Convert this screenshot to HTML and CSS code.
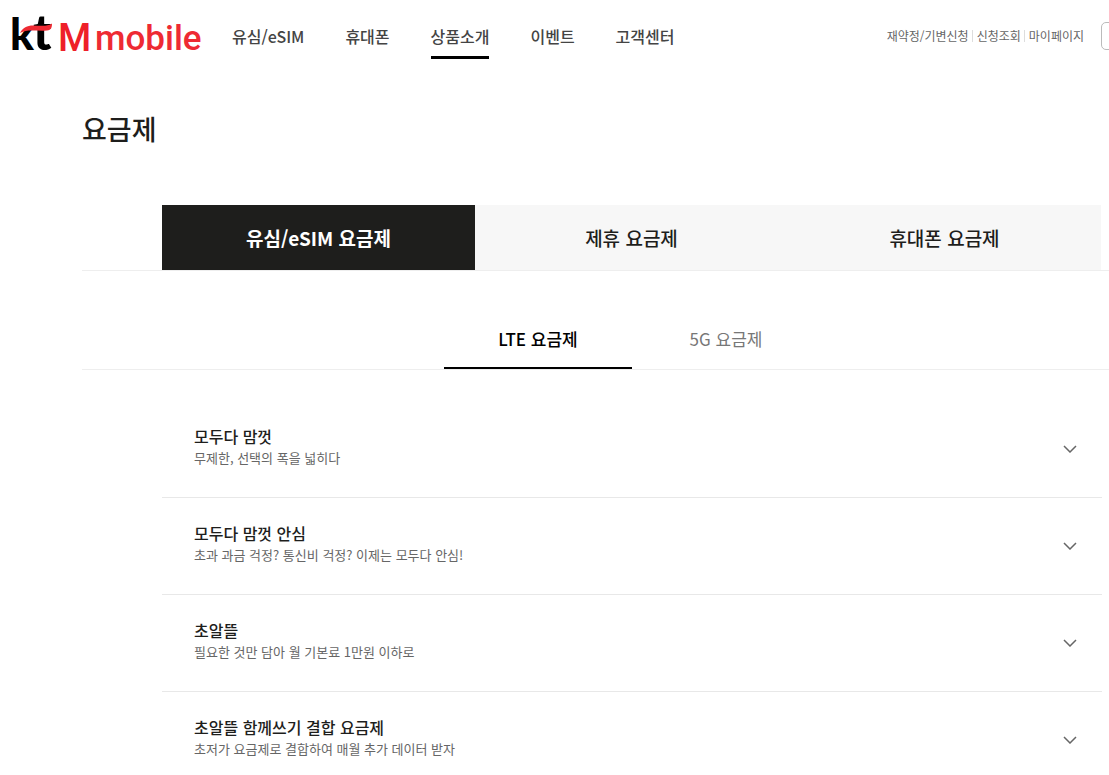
FILE: index.html
```html
<!DOCTYPE html>
<html lang="ko">
<head>
<meta charset="utf-8">
<meta name="viewport" content="width=device-width, initial-scale=1">
<title>요금제 | kt M mobile</title>
<link rel="stylesheet" href="styles.css">
</head>
<body>
<header class="header">
  <a class="logo" href="#" aria-label="kt M mobile">
    <svg class="logo-art" viewBox="0 0 192 44" aria-hidden="true">
      <text class="logo-k" x="-2" y="36">k</text>
      <text class="logo-t" x="21" y="36">t</text>
      <path class="logo-swoosh" d="M8 19C11 13.500 15 11.500 21 11.500C28 11.500 35 13 40 9.500C40 13 39.500 16 35 16.500C30 17 25 16.500 20 16.500C15 16.500 12 17 8 19Z"/>
      <text class="logo-m" x="46" y="37">M</text>
      <text class="logo-mobile" x="83" y="36">mobile</text>
    </svg>
  </a>
  <nav class="gnb" aria-label="주 메뉴">
    <a href="#">유심/eSIM</a>
    <a href="#">휴대폰</a>
    <a class="is-active" href="#">상품소개</a>
    <a href="#">이벤트</a>
    <a href="#">고객센터</a>
  </nav>
  <nav class="util" aria-label="바로가기">
    <a href="#">재약정/기변신청</a>
    <a href="#">신청조회</a>
    <a href="#">마이페이지</a>
  </nav>
  <button class="search" type="button" aria-label="검색"></button>
</header>

<main class="content">
  <h1 class="title">요금제</h1>
  <div class="tabs-wrap">
    <div class="tabs" role="tablist">
      <button class="tab is-active" type="button" role="tab" aria-selected="true">유심/eSIM 요금제</button>
      <button class="tab" type="button" role="tab" aria-selected="false">제휴 요금제</button>
      <button class="tab" type="button" role="tab" aria-selected="false">휴대폰 요금제</button>
    </div>
  </div>
  <div class="subtabs-wrap">
    <div class="subtabs" role="tablist">
      <button class="subtab is-active" type="button" role="tab" aria-selected="true">LTE 요금제</button>
      <button class="subtab" type="button" role="tab" aria-selected="false">5G 요금제</button>
    </div>
  </div>
  <ul class="plans">
    <li><button class="plan" type="button" aria-expanded="false">
      <span class="plan-text"><strong class="plan-name">모두다 맘껏</strong><span class="plan-desc">무제한, 선택의 폭을 넓히다</span></span>
      <svg class="chevron" viewBox="0 0 14 8" aria-hidden="true"><path d="M1 1L7 7L13 1"/></svg>
    </button></li>
    <li><button class="plan" type="button" aria-expanded="false">
      <span class="plan-text"><strong class="plan-name">모두다 맘껏 안심</strong><span class="plan-desc">초과 과금 걱정? 통신비 걱정? 이제는 모두다 안심!</span></span>
      <svg class="chevron" viewBox="0 0 14 8" aria-hidden="true"><path d="M1 1L7 7L13 1"/></svg>
    </button></li>
    <li><button class="plan" type="button" aria-expanded="false">
      <span class="plan-text"><strong class="plan-name">초알뜰</strong><span class="plan-desc">필요한 것만 담아 월 기본료 1만원 이하로</span></span>
      <svg class="chevron" viewBox="0 0 14 8" aria-hidden="true"><path d="M1 1L7 7L13 1"/></svg>
    </button></li>
    <li><button class="plan" type="button" aria-expanded="false">
      <span class="plan-text"><strong class="plan-name">초알뜰 함께쓰기 결합 요금제</strong><span class="plan-desc">초저가 요금제로 결합하여 매월 추가 데이터 받자</span></span>
      <svg class="chevron" viewBox="0 0 14 8" aria-hidden="true"><path d="M1 1L7 7L13 1"/></svg>
    </button></li>
  </ul>
</main>
</body>
</html>
```

FILE: styles.css
```css
* {
  box-sizing: border-box;
}

html {
  overflow-x: hidden;
  scrollbar-width: none;
}

body {
  margin: 0;
  background: #fff;
  color: #1e1e1c;
  font-family: "Noto Sans CJK KR", sans-serif;
}

a {
  color: inherit;
  text-decoration: none;
  white-space: nowrap;
}

button {
  margin: 0;
  padding: 0;
  border: 0;
  background: none;
  color: inherit;
  font: inherit;
  cursor: pointer;
}

/* Header */
.header {
  display: flex;
  align-items: center;
  height: 72px;
  padding-left: 12px;
  overflow: hidden;
}

.logo {
  flex: none;
  width: 192px;
}

.logo-art {
  display: block;
  width: 100%;
  overflow: visible;
}

.logo-k {
  font: 900 44px Lato, sans-serif;
  fill: #000;
}

.logo-t {
  font: 900 49px Lato, sans-serif;
  fill: #000;
}

.logo-swoosh {
  fill: #ee2a33;
}

.logo-m {
  font: 500 38px Roboto, sans-serif;
  fill: #ee2029;
}

.logo-mobile {
  font: 500 35px Roboto, sans-serif;
  fill: #ee2a33;
}

.gnb {
  display: flex;
  gap: 41px;
  margin-left: 28px;
  color: #444;
  font-size: 16px;
  font-weight: 500;
  line-height: 24px;
}

.gnb a {
  padding: 10px 0 8px;
  border-bottom: 3px solid transparent;
}

.gnb .is-active {
  border-color: #000;
}

.util {
  display: flex;
  align-items: center;
  gap: 3px;
  margin-left: auto;
  color: #666;
  font-size: 12px;
  line-height: 12px;
}

.util a + a {
  padding-left: 4px;
  border-left: 1px solid #ddd;
}

.search {
  flex: none;
  width: 36px;
  height: 28px;
  margin: 0 -28px 0 17px;
  border: 1px solid #bbb;
  border-radius: 5px;
}

/* Page */
.content {
  padding-left: 82px;
}

.title {
  margin: 0;
  padding: 37px 0 56px;
  font-size: 27px;
  font-weight: 500;
  line-height: 40px;
}

.tabs-wrap,
.subtabs-wrap {
  padding: 0 7px 0 80px;
  border-bottom: 1px solid #eee;
}

.tabs {
  display: grid;
  grid-template-columns: repeat(3, 1fr);
  padding-right: 1px;
}

.tab {
  height: 65px;
  background: #f7f7f7;
  font-size: 19px;
  font-weight: 500;
}

.tab.is-active {
  background: #1e1e1c;
  color: #fff;
  font-weight: 700;
}

.subtabs-wrap {
  padding-top: 39px;
}

.subtabs {
  display: grid;
  grid-template-columns: 1fr 1fr;
  width: 40%;
  margin: 0 auto;
}

.subtab {
  height: 59px;
  border-bottom: 2px solid transparent;
  color: #777;
  font-size: 17px;
}

.subtab.is-active {
  border-color: #000;
  color: #000;
  font-weight: 500;
}

.plans {
  margin: 0;
  padding: 31px 7px 0 80px;
  list-style: none;
}

.plans li {
  border-bottom: 1px solid #e8e8e8;
}

.plan {
  display: flex;
  align-items: center;
  justify-content: space-between;
  width: 100%;
  padding: 24px 25px 24px 32px;
  text-align: left;
}

.plan-text {
  padding-bottom: 4px;
}

.plan-name,
.plan-desc {
  display: block;
  line-height: 22px;
}

.plan-name {
  font-size: 16px;
  font-weight: 500;
}

.plan-desc {
  color: #666;
  font-size: 13px;
}

.chevron {
  flex: none;
  width: 14px;
  height: 8px;
  fill: none;
  stroke: #666;
  stroke-width: 1.5;
}
```
